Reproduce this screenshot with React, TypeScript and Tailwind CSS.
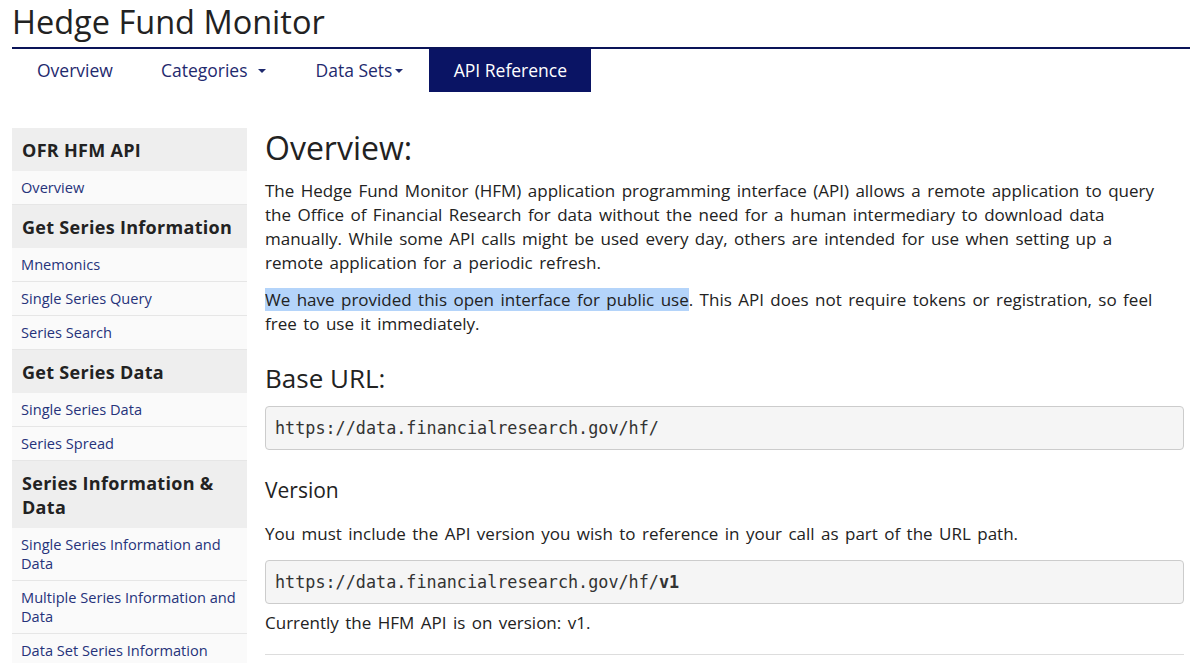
const font = { fontFamily: '"Open Sans", "Noto Sans", sans-serif' }
const mono = { fontFamily: '"DejaVu Sans Mono", "Liberation Mono", monospace' }

type SideItem = { label: string; header?: boolean }

const sidebar: SideItem[] = [
  { label: 'OFR HFM API', header: true },
  { label: 'Overview' },
  { label: 'Get Series Information', header: true },
  { label: 'Mnemonics' },
  { label: 'Single Series Query' },
  { label: 'Series Search' },
  { label: 'Get Series Data', header: true },
  { label: 'Single Series Data' },
  { label: 'Series Spread' },
  { label: 'Series Information & Data', header: true },
  { label: 'Single Series Information and Data' },
  { label: 'Multiple Series Information and Data' },
  { label: 'Data Set Series Information' },
]

function Caret() {
  return <span className="inline-block h-0 w-0 border-x-[4px] border-t-[4px] border-x-transparent border-t-[#1f2a6e]" />
}

export default function App() {
  return (
    <div className="h-[663px] w-[1200px] overflow-hidden bg-white text-[#222]" style={font}>
      <header className="px-3">
        <h1 className="-mt-[3px] text-[32.5px] leading-[50px] text-[#222]">Hedge Fund Monitor</h1>
        <div className="mr-[-2px] h-[2px] bg-[#0a1458]" />
        <nav className="flex h-[43px] text-[17.5px] text-[#1f2a6e]">
          <a className="flex items-center pl-[25px] pr-[48px]">Overview</a>
          <a className="flex items-center gap-[11px] pr-[49px]">
            Categories
            <Caret />
          </a>
          <a className="flex items-center gap-[3px] pr-[26px]">
            Data Sets
            <Caret />
          </a>
          <a className="flex w-[162px] items-center justify-center bg-[#0a1464] text-white">API Reference</a>
        </nav>
      </header>

      <div className="mt-[36px] flex gap-[18px] px-3">
        <aside className="w-[235px] shrink-0">
          {sidebar.map((item) =>
            item.header ? (
              <div
                key={item.label}
                className="bg-[#eeeeee] px-[10px] py-[9.5px] text-[18px] font-bold leading-[24px] tracking-[0.3px] text-[#222]"
              >
                {item.label}
              </div>
            ) : (
              <div
                key={item.label}
                className="border-b border-[#e6e6e6] bg-[#fafafa] py-[7px] pl-[9px] pr-[6px] text-[14.6px] leading-[19px] text-[#26337a]"
              >
                {item.label}
              </div>
            ),
          )}
        </aside>

        <main className="min-w-0 flex-1 pr-[4px] text-[17px] leading-[24px] [word-spacing:2px]">
          <h2 className="mt-0 text-[32px] leading-[40px] text-[#222] [word-spacing:0]">Overview:</h2>
          <p className="mt-[11px]">
            The Hedge Fund Monitor (HFM) application programming interface (API) allows a remote application to query
            <br />
            the Office of Financial Research for data without the need for a human intermediary to download data
            <br />
            manually. While some API calls might be used every day, others are intended for use when setting up a
            <br />
            remote application for a periodic refresh.
          </p>
          <p className="mt-[13px]">
            <span className="bg-[#b4d4fa]">We have provided this open interface for public use</span>. This API does
            not require tokens or registration, so feel
            <br />
            free to use it immediately.
          </p>

          <h3 className="mt-[26px] text-[26px] leading-[32px] [word-spacing:0]">Base URL:</h3>
          <pre
            className="mt-[12px] rounded-[4px] border border-[#cccccc] bg-[#f5f5f5] px-[9px] py-[9px] text-[16.8px] leading-[24px] text-[#333] [word-spacing:0]"
            style={mono}
          >
            https://data.financialresearch.gov/hf/
          </pre>

          <h4 className="mt-[26px] text-[21px] leading-[28px] [word-spacing:0]">Version</h4>
          <p className="mt-[18px]">
            You must include the API version you wish to reference in your call as part of the URL path.
          </p>
          <pre
            className="mt-[14px] rounded-[4px] border border-[#cccccc] bg-[#f5f5f5] px-[9px] py-[9px] text-[16.8px] leading-[24px] text-[#333] [word-spacing:0]"
            style={mono}
          >
            https://data.financialresearch.gov/hf/<b>v1</b>
          </pre>
          <p className="mt-[7px]">Currently the HFM API is on version: v1.</p>
          <hr className="mt-[19px] border-t border-[#dddddd]" />
        </main>
      </div>
    </div>
  )
}
